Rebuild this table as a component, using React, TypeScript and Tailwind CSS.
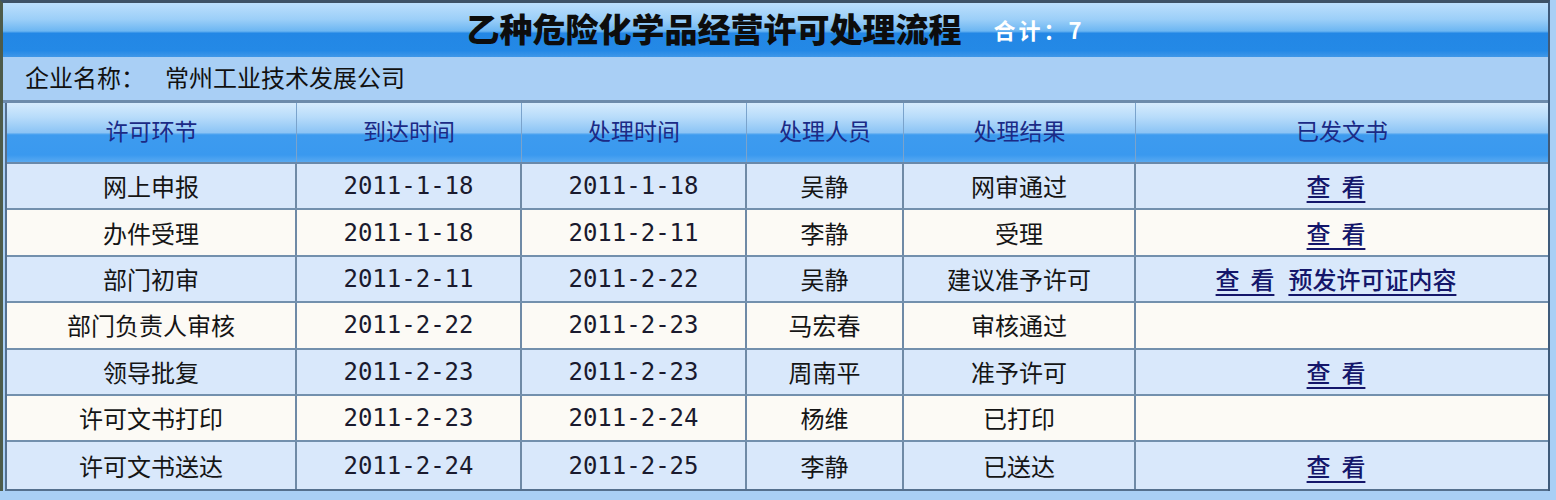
import React from 'react'

type Row = {
  step: string
  arrive: string
  done: string
  person: string
  result: string
  docs: string[]
}

const rows: Row[] = [
  { step: '网上申报', arrive: '2011-1-18', done: '2011-1-18', person: '吴静', result: '网审通过', docs: ['查 看'] },
  { step: '办件受理', arrive: '2011-1-18', done: '2011-2-11', person: '李静', result: '受理', docs: ['查 看'] },
  { step: '部门初审', arrive: '2011-2-11', done: '2011-2-22', person: '吴静', result: '建议准予许可', docs: ['查 看', '预发许可证内容'] },
  { step: '部门负责人审核', arrive: '2011-2-22', done: '2011-2-23', person: '马宏春', result: '审核通过', docs: [] },
  { step: '领导批复', arrive: '2011-2-23', done: '2011-2-23', person: '周南平', result: '准予许可', docs: ['查 看'] },
  { step: '许可文书打印', arrive: '2011-2-23', done: '2011-2-24', person: '杨维', result: '已打印', docs: [] },
  { step: '许可文书送达', arrive: '2011-2-24', done: '2011-2-25', person: '李静', result: '已送达', docs: ['查 看'] },
]

const headers = ['许可环节', '到达时间', '处理时间', '处理人员', '处理结果', '已发文书']

const cols = 'grid grid-cols-[290px_225px_225px_157px_232px_1fr]'

export default function App() {
  return (
    <div className="w-[1556px] h-[500px] overflow-hidden bg-[#a9cff5] font-['Noto_Sans_CJK_SC',sans-serif]">
      <div className="w-[1550px] border-l-[3px] border-t-[3px] border-r-2 border-l-[#4d5b4a] border-t-[#3e5266] border-r-[#3e5a7a]">
        {/* title bar */}
        <div className="h-[54px] flex items-center justify-center gap-[32px] bg-[linear-gradient(to_bottom,#bcdffc_0%,#9ccff8_30%,#6cb6f2_52%,#2387e5_56%,#2489e6_88%,#3f97e8_100%)]">
          <span className="text-[33px] leading-none font-black text-[#0d0d0d] pb-[4px]">乙种危险化学品经营许可处理流程</span>
          <span className="text-[22px] leading-none font-bold tracking-[3px] text-white pb-[2px] whitespace-pre">合计：7</span>
        </div>

        {/* company */}
        <div className="h-[46px] flex items-center pl-[22px] pb-[3px] bg-[#a9cff5] border-b-[3px] border-[#6d8bab] text-[24px] leading-none text-[#111]">
          <span>企业名称：</span>
          <span className="ml-[20px]">常州工业技术发展公司</span>
        </div>

        {/* table */}
        <div className="ml-[2px] border-l-2 border-b-2 border-[#55708e]">
          <div className={`${cols} h-[61px] border-b-2 border-[#6a89aa] bg-[linear-gradient(to_bottom,#d6ebfd_0%,#b6dbfa_25%,#8cc4f5_50%,#3d9bef_54%,#3a99ef_88%,#58a9f1_100%)]`}>
            {headers.map((h, i) => (
              <div
                key={h}
                className={`flex items-center justify-center pb-[4px] text-[23px] leading-none text-[#1b2a86] ${i < 5 ? 'border-r border-[#7aa3cc]' : ''}`}
              >
                {h}
              </div>
            ))}
          </div>

          {rows.map((r, idx) => (
            <div
              key={r.step}
              className={`${cols} h-[46.4px] text-[24px] leading-none text-[#151515] ${idx < rows.length - 1 ? 'border-b-2 border-[#7390ad]' : ''} ${idx % 2 === 0 ? 'bg-[#d9e8fb]' : 'bg-[#fcfaf5]'}`}
            >
              <div className="flex items-center justify-center border-r-2 border-[#6f8aa6]">{r.step}</div>
              <div className="flex items-center justify-center border-r-2 border-[#6f8aa6] font-['DejaVu_Sans_Mono',monospace] text-[24px] text-[#1a1a2e]">
                {r.arrive}
              </div>
              <div className="flex items-center justify-center border-r-2 border-[#6f8aa6] font-['DejaVu_Sans_Mono',monospace] text-[24px] text-[#1a1a2e]">
                {r.done}
              </div>
              <div className="flex items-center justify-center border-r-2 border-[#6f8aa6]">{r.person}</div>
              <div className="flex items-center justify-center border-r-2 border-[#6f8aa6]">{r.result}</div>
              <div className="flex items-center justify-center gap-[14px] pr-[12px]">
                {r.docs.map((d) => (
                  <a
                    key={d}
                    href="#"
                    className="whitespace-pre font-medium text-[#14166a] underline underline-offset-[5px] decoration-[2px]"
                  >
                    {d === '查 看' ? '查  看' : d}
                  </a>
                ))}
              </div>
            </div>
          ))}
        </div>
      </div>
    </div>
  )
}
